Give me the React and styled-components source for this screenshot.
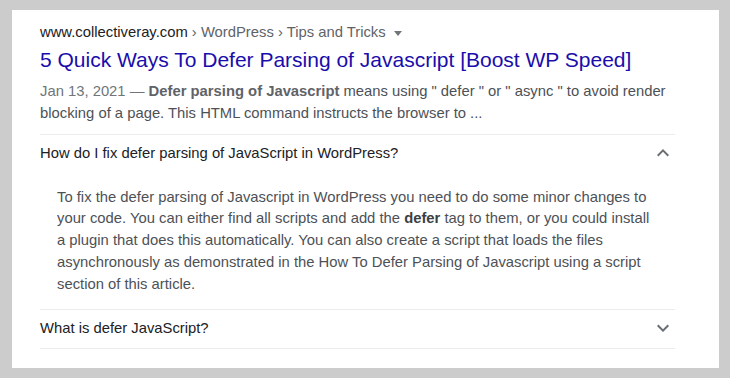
import React from "react";
import styled, { createGlobalStyle } from "styled-components";

const Global = createGlobalStyle`
  html, body { margin: 0; padding: 0; background: #cccccc; }
  body { font-family: "Liberation Sans", Arial, sans-serif; }
`;

const Frame = styled.div`
  padding: 10px 11px 10px 12px;
  width: 730px;
  height: 378px;
  box-sizing: border-box;
`;

const Card = styled.div`
  background: #ffffff;
  width: 707px;
  height: 358px;
  box-sizing: border-box;
  padding: 12px 44px 0 28px;
`;

const Breadcrumb = styled.div`
  display: flex;
  align-items: center;
  font-size: 14.8px;
  line-height: 20px;
  color: #5f6368;
  white-space: pre;
`;

const Site = styled.span`
  color: #202124;
`;

const Caret = styled.span`
  display: inline-block;
  width: 0;
  height: 0;
  margin-left: 8px;
  margin-top: 2px;
  border-left: 4.5px solid transparent;
  border-right: 4.5px solid transparent;
  border-top: 5px solid #70757a;
`;

const Title = styled.h3`
  margin: 5px 0 0;
  font-size: 21px;
  line-height: 26px;
  font-weight: 400;
  color: #1a0dab;
  white-space: nowrap;
`;

const Snippet = styled.div`
  margin-top: 7px;
  font-size: 14.8px;
  line-height: 22px;
  color: #4d5156;
  b { font-weight: 700; color: #5f6368; }
`;

const DateText = styled.span`
  color: #70757a;
`;

const Faq = styled.div`
  margin-top: 10px;
`;

const Item = styled.div`
  border-top: 1px solid #ececec;
  &:last-child { border-bottom: 1px solid #ececec; }
`;

const Question = styled.div`
  display: flex;
  align-items: center;
  justify-content: space-between;
  height: 38px;
  box-sizing: border-box;
  padding: 8px 0 10px 0;
  font-size: 14.8px;
  line-height: 20px;
  color: #202124;
`;

const Answer = styled.div`
  padding: 13.5px 20px 13.75px 17px;
  font-size: 14.8px;
  line-height: 21.75px;
  color: #4d5156;
  b { font-weight: 700; color: #3c4043; }
`;

const Chevron = ({ up }) => (
  <svg width="24" height="24" viewBox="0 0 24 24" fill="#6a6e73">
    {up ? (
      <path d="M12 8l-6 6 1.41 1.41L12 10.83l4.59 4.58L18 14z" />
    ) : (
      <path d="M16.59 8.59L12 13.17 7.41 8.59 6 10l6 6 6-6z" />
    )}
  </svg>
);

export default function App() {
  return (
    <>
      <Global />
      <Frame>
        <Card>
          <Breadcrumb>
            <Site>www.collectiveray.com</Site>
            {" › WordPress › Tips and Tricks"}
            <Caret />
          </Breadcrumb>
          <Title>5 Quick Ways To Defer Parsing of Javascript [Boost WP Speed]</Title>
          <Snippet>
            <DateText>Jan 13, 2021 — </DateText>
            <b>Defer parsing of Javascript</b> means using " defer " or " async " to avoid render
            blocking of a page. This HTML command instructs the browser to ...
          </Snippet>
          <Faq>
            <Item>
              <Question>
                How do I fix defer parsing of JavaScript in WordPress?
                <Chevron up />
              </Question>
              <Answer>
                To fix the defer parsing of Javascript in WordPress you need to do some minor changes to
                your code. You can either find all scripts and add the <b>defer</b> tag to them, or you could install
                a plugin that does this automatically. You can also create a script that loads the files
                asynchronously as demonstrated in the How To Defer Parsing of Javascript using a script
                section of this article.
              </Answer>
            </Item>
            <Item>
              <Question>
                What is defer JavaScript?
                <Chevron />
              </Question>
            </Item>
          </Faq>
        </Card>
      </Frame>
    </>
  );
}
